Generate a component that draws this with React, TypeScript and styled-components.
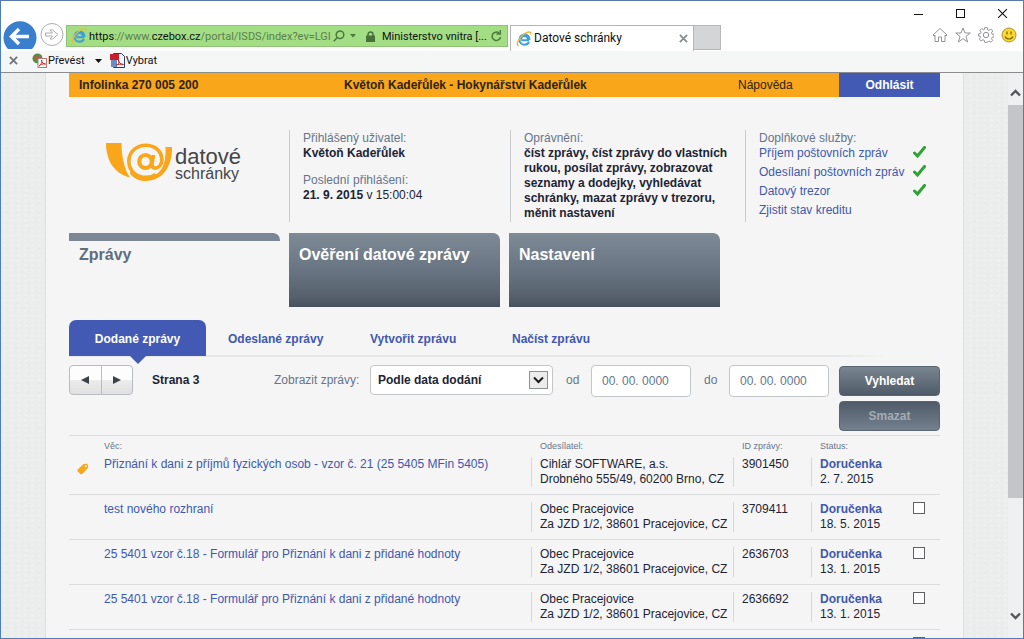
import React from "react";
import styled, { createGlobalStyle, css } from "styled-components";

const ui = `Roboto, "Open Sans", sans-serif`;
const body = `"Liberation Sans", Arial, sans-serif`;

const colors = {
  orange: "#f9a61b",
  blue: "#435ab5",
  link: "#3f58b0",
  page: "#f5f5f5",
  muted: "#66758c",
  text: "#1c2436",
  line: "#dadcde",
};

const GlobalStyle = createGlobalStyle`
  * { box-sizing: border-box; }
  body { margin: 0; background: #fff; font-family: ${body}; font-size: 12px; line-height: 15px; color: ${colors.text}; }
  button, input, select { font: inherit; color: inherit; margin: 0; }
  button { cursor: pointer; }
  a { color: ${colors.link}; text-decoration: none; }
  svg { display: block; flex: none; }
`;

const Window = styled.div`
  display: flex;
  flex-direction: column;
  height: 100vh;
  overflow: hidden;
  border: 1px solid #4a7ebf;
  border-top-color: #5a7ba5;
`;

/* Browser chrome */
const Chrome = styled.header`
  display: flex;
  align-items: flex-end;
  height: 50px;
  flex: none;
  padding-left: 2px;
  background: #fff;
  font-family: ${ui};
  font-size: 11px;
  color: #111;
`;

const IconButton = styled.button`
  display: block;
  padding: 0;
  border: 0;
  background: none;
`;

const NavButtons = styled.div`
  display: flex;
  align-items: center;
  gap: 3px;
  width: 63px;
  height: 32px;
  margin-bottom: 1px;
`;

const AddressBar = styled.div`
  display: flex;
  align-items: center;
  flex: 0 1 442px;
  height: 22px;
  margin-bottom: 4px;
  padding: 0 4px;
  background: #a3dd84;
  border: 1px solid #8fc276;
  white-space: nowrap;
`;

const Url = styled.div`
  width: 242px;
  margin-left: 2px;
  color: #5d7d4e;
  b { font-weight: 400; color: #111; }
`;

const AddressTools = styled.div`
  display: flex;
  align-items: center;
  gap: 5px;
  margin-left: 2px;
`;

const Certificate = styled.span`
  display: flex;
  align-items: center;
  gap: 7px;
  width: 121px;
  margin: 0 4px 0 10px;
`;

const BrowserTab = styled.div`
  display: flex;
  align-items: center;
  gap: 2px;
  width: 184px;
  height: 26px;
  margin-left: 2px;
  padding: 0 5px;
  border: 1px solid #b4b4b4;
  border-bottom: 0;
  background: #fff;
  font-size: 12px;
  span { flex: 1; }
`;

const NewTab = styled.button`
  width: 27px;
  height: 25px;
  margin-bottom: 1px;
  padding: 0;
  border: 1px solid #b8b8b8;
  border-left: 0;
  background: #d4d5d7;
`;

const WindowSide = styled.div`
  display: flex;
  flex-direction: column;
  align-items: flex-end;
  align-self: stretch;
  margin-left: auto;
  padding: 7px 6px 0 0;
  gap: 8px;
`;

const WindowButtons = styled.div`
  display: flex;
  gap: 31px;
  padding-right: 9px;
`;

const BrowserTools = styled.div`
  display: flex;
  gap: 7px;
`;

const Toolbar = styled.div`
  display: flex;
  align-items: center;
  flex: none;
  height: 22px;
  padding: 0 0 2px 8px;
  background: #f5f6f6;
  border-bottom: 1px solid #8a8c8f;
  font-family: ${ui};
  font-size: 11px;
  color: #111;
`;

const ToolItem = styled.button<{ $gap?: number }>`
  display: flex;
  align-items: center;
  gap: 1px;
  margin-left: ${(p) => p.$gap ?? 0}px;
  padding: 0;
  border: 0;
  background: none;
`;

/* Web page */
const Viewport = styled.div`
  display: flex;
  flex: 1;
  min-height: 0;
`;

const Backdrop = styled.main`
  flex: 1;
  min-width: 0;
  overflow: hidden;
  background-color: #ebeded;
  background-image: radial-gradient(#eeefef 1px, transparent 2px), radial-gradient(#e9ebeb 1px, transparent 2px);
  background-size: 7px 5px, 11px 9px;
`;

const Page = styled.div`
  max-width: 919px;
  margin: 0 auto;
  padding: 0 23px;
  background: ${colors.page};
  border: solid #dfe1e1;
  border-width: 0 1px;
`;

const TopBar = styled.div`
  display: grid;
  grid-template-columns: 275px 1fr 101px 101px;
  align-items: center;
  height: 24px;
  background: ${colors.orange};
  color: #2b2412;
  b { padding-left: 10px; }
  b + b { padding-left: 0; }
  > a { color: inherit; }
`;

const Logout = styled.button`
  height: 24px;
  border: 0;
  background: ${colors.blue};
  color: #fff;
  font-weight: 700;
`;

const Intro = styled.section`
  display: grid;
  grid-template-columns: 220px 221px 235px 1fr;
  margin-top: 33px;
  height: 92px;
`;

const InfoColumn = styled.div`
  padding: 1px 0 0 13px;
  border-left: 1px solid #c9cbcd;
`;

const Muted = styled.div`
  color: ${colors.muted};
`;

const InfoGroup = styled.div`
  margin-bottom: 12px;
`;

const Services = styled.ul`
  margin: 0;
  padding: 0;
  list-style: none;
  li { display: flex; justify-content: space-between; height: 19px; width: 167px; }
`;

const Logo = styled.a`
  display: flex;
  align-self: start;
  gap: 2px;
  margin: 12px 0 0 36px;
  color: #44464a;
`;

const LogoText = styled.div`
  font-size: 16px;
  line-height: 14px;
  padding-top: 5px;
  span { display: block; font-size: 22px; line-height: 20px; }
`;

const MainTabs = styled.nav`
  display: flex;
  gap: 9px;
  margin-top: 11px;
`;

const MainTab = styled.a<{ $active?: boolean }>`
  flex: 0 1 211px;
  height: 74px;
  padding: 14px 10px;
  border-radius: 0 7px 0 0;
  font-size: 16px;
  line-height: 16px;
  font-weight: 700;
  color: #fff;
  background: linear-gradient(#7f8a97, #66727f 55%, #56616d 85%, #47525e);
  ${(p) =>
    p.$active &&
    css`
      color: #5f6d80;
      background: linear-gradient(#7b8794, #7b8794) no-repeat 0 0 / 100% 8px;
    `}
`;

const SubTabs = styled.nav`
  display: flex;
  height: 37px;
  margin-top: 13px;
  background: linear-gradient(90deg, #e6e7e8 0 88%, transparent 94%) no-repeat 0 100% / 100% 2px;
  font-weight: 700;
`;

const SubTab = styled.a`
  width: 142px;
  padding: 12px 0 0 22px;
`;

const ActiveSubTab = styled.a`
  position: relative;
  width: 137px;
  height: 36px;
  padding-top: 12px;
  border-radius: 7px 7px 0 0;
  background: ${colors.blue};
  color: #fff;
  text-align: center;
  &::after {
    content: "";
    position: absolute;
    top: 100%;
    left: 50%;
    margin-left: -8px;
    border: solid transparent;
    border-top-color: ${colors.blue};
    border-width: 8px 8px 0;
  }
`;

const Filters = styled.form`
  display: flex;
  align-items: flex-start;
  margin-top: 8px;
  height: 70px;
  color: ${colors.muted};
  > * { flex: none; }
  b { width: 122px; margin-left: 19px; color: ${colors.text}; line-height: 30px; }
`;

const Pager = styled.div`
  display: flex;
  width: 64px;
  height: 30px;
  border: 1px solid #b9bcc0;
  border-radius: 4px;
  background: linear-gradient(#fdfdfd 50%, #ececec 50%, #e0e0e0);
`;

const PagerButton = styled.button`
  display: grid;
  place-items: center;
  flex: 1;
  padding: 0;
  border: 0;
  background: none;
  & + & { border-left: 1px solid #b9bcc0; }
`;

const FieldLabel = styled.label<{ $width: number }>`
  width: ${(p) => p.$width}px;
  line-height: 30px;
`;

const SelectBox = styled.div`
  position: relative;
  width: 183px;
  margin-right: 13px;
  svg { position: absolute; right: 5px; top: 6px; pointer-events: none; }
`;

const Select = styled.select`
  appearance: none;
  width: 100%;
  height: 30px;
  padding: 0 7px;
  border: 1px solid #c4c7ca;
  border-radius: 4px;
  background: #fff;
  color: ${colors.text};
  font-weight: 700;
`;

const DateInput = styled.input`
  width: 100px;
  height: 32px;
  padding: 0 10px;
  border: 1px solid #c4c7ca;
  border-radius: 4px;
  background: #fff;
  color: ${colors.muted};
  & + label { margin-left: 13px; }
`;

const Actions = styled.div`
  display: grid;
  gap: 5px;
  width: 101px;
  margin: 1px 0 0 auto;
`;

const ActionButton = styled.button`
  height: 30px;
  padding: 0;
  border: 1px solid #5a6572;
  border-radius: 4px;
  background: linear-gradient(#7a8592, #4f5b68);
  color: #fff;
  font-weight: 700;
  &:disabled { background: linear-gradient(#4f5b68, #74808e); color: #a3acb6; }
`;

const Messages = styled.table`
  width: 100%;
  table-layout: fixed;
  border-spacing: 0;
  th, td { padding: 0; text-align: left; vertical-align: top; }
  th {
    height: 21px;
    border-top: 1px solid ${colors.line};
    font-size: 9px;
    line-height: 20px;
    font-weight: 400;
    color: ${colors.muted};
  }
  th + th + th { padding-left: 9px; }
  td { height: 45px; padding: 7px 0; border-top: 1px solid ${colors.line}; }
  tbody tr:first-child td { height: 38px; padding-top: 1px; border-top: 0; }
`;

const Cell = styled.div`
  height: 30px;
  padding-left: 8px;
  border-left: 1px solid #d5d8db;
  white-space: nowrap;
`;

const Checkbox = styled.input`
  appearance: none;
  display: block;
  width: 12px;
  height: 12px;
  margin: 0 0 0 8px;
  border: 1px solid #5f6164;
  background: #fff;
`;

const TagCell = styled.div`
  padding: 6px 0 0 8px;
`;

const Scrollbar = styled.div`
  display: flex;
  flex-direction: column;
  align-items: center;
  width: 15px;
  padding: 16px 0 18px;
  background: #eff0f1;
`;

const ScrollThumb = styled.div`
  width: 100%;
  flex: 0 0 74%;
  margin: 8px 0 auto;
  background: #c3c5c8;
`;

const IeLogo = () => (
  <svg width="16" height="16" viewBox="0 0 16 16" fill="none">
    <path d="M13.2 9.3H5.2M5 8.2c.3-2 1.600-3.200 3.500-3.200s3.200 1.200 3.400 3.100M13 11c-.8 1.700-2.400 2.700-4.400 2.700C5.600 13.700 3.500 11.600 3.500 8.700s2.200-5.200 5.100-5.200c3 0 5 2.200 4.900 5.400" stroke="#3d9fe0" strokeWidth="2" />
    <path d="M2.500 14.800C-.5 14 3 7 7.500 3.500 11 .8 15.500-.5 14.800 3.500" stroke="#f0b92c" strokeWidth="1.400" />
  </svg>
);

const Check = () => (
  <svg width="13" height="13" viewBox="0 0 13 13">
    <path d="M1.500 7l3 3L11.500 1.500" fill="none" stroke="#2da336" strokeWidth="3" strokeLinecap="round" />
  </svg>
);

const Close = ({ size, color, weight = 1 }: { size: number; color: string; weight?: number }) => (
  <svg width={size} height={size} viewBox="0 0 10 10" stroke={color} strokeWidth={weight}>
    <path d="M1 1l8 8M9 1l-8 8" />
  </svg>
);

const Arrow = ({ left }: { left?: boolean }) => (
  <svg width="8" height="8" viewBox="0 0 8 8" fill="#3c4048">
    <path d={left ? "M8 0v8L0 4z" : "M0 0v8l8-4z"} />
  </svg>
);

const ScrollArrow = ({ down }: { down?: boolean }) => (
  <svg width="11" height="8" viewBox="0 0 11 8" fill="none" stroke="#54575b" strokeWidth="2.400">
    <path d={down ? "M1 1.500l4.500 4.500L10 1.500" : "M1 6.500L5.500 2 10 6.500"} />
  </svg>
);

const PdfIcon = ({ globe }: { globe?: boolean }) => (
  <svg width="15" height="15" viewBox="0 0 15 15">
    {globe ? (
      <>
        <circle cx="5.500" cy="5.500" r="5" fill="#3b9e45" />
        <path d="M2 2.500l4-1 2 2-3 2-3 3zM8 1l2 2-1 3z" fill="#9a6a45" />
        <rect x="6" y="5.500" width="8.500" height="9" fill="#fff" stroke="#b77" />
        <path d="M7 13c3-2 3-5 2.500-6 0 3 2 4 4 4-3-.5-5 .5-6.500 2z" fill="none" stroke="#d22" />
      </>
    ) : (
      <>
        <path d="M3.500.5h8l3 3v11h-11z" fill="#f4f6fa" stroke="#223f7d" />
        <rect x="0" y="1" width="9" height="6" fill="#c8202f" />
        <rect x="1" y="7" width="6" height="7" fill="#6c8ac4" />
        <path d="M6 12.500c4-2 3-4.500 2.500-5.500 0 3 2 4 5 4.500-3-.5-6-.5-7.500 1z" fill="none" stroke="#c22" />
      </>
    )}
  </svg>
);

const HornLogo = () => (
  <svg width="68" height="41" viewBox="0 0 68 41" fill="none">
    <path d="M1 1h15.500c0 14 3 26 8.500 34.500C10 32 1 19 1 1z" fill={colors.orange} />
    <path d="M60.500 5h6.500c.5 19-9 34-26.500 34-6.500 0-12-2.500-16-8l3-3c8 8 20 8.500 27 1.500 4.500-5 6.500-12 6-24.500z" fill={colors.orange} />
    <path d="M51 32.500C46 36 36 37 29.500 31.500c-7.500-6.500-7.500-17.500-.5-24 7-6 18-5.500 24 .5 4.500 4.700 5 11.500 2 15.500-3 3.800-8.500 3.500-8-1.500l1.500-9" stroke={colors.orange} strokeWidth="3.600" />
    <ellipse cx="40.500" cy="19.500" rx="6.300" ry="6.500" stroke={colors.orange} strokeWidth="4" />
  </svg>
);

interface Message {
  subject: string;
  sender: string;
  address: string;
  id: string;
  date: string;
  tagged?: boolean;
}

const form = "25 5401 vzor č.18 - Formulář pro Přiznání k dani z přidané hodnoty";
const obec = { sender: "Obec Pracejovice", address: "Za JZD 1/2, 38601 Pracejovice, CZ" };

const messages: Message[] = [
  { subject: "Přiznání k dani z příjmů fyzických osob - vzor č. 21 (25 5405 MFin 5405)", sender: "Cihlář SOFTWARE, a.s.", address: "Drobného 555/49, 60200 Brno, CZ", id: "3901450", date: "2. 7. 2015", tagged: true },
  { subject: "test nového rozhraní", ...obec, id: "3709411", date: "18. 5. 2015" },
  { subject: form, ...obec, id: "2636703", date: "13. 1. 2015" },
  { subject: form, ...obec, id: "2636692", date: "13. 1. 2015" },
];

const services = ["Příjem poštovních zpráv", "Odesílaní poštovních zpráv", "Datový trezor"];

const BrowserChrome = () => (
  <>
    <Chrome>
      <NavButtons>
        <IconButton aria-label="Zpět">
          <svg width="34" height="32" viewBox="0 0 34 32">
            <path d="M5 31A16.500 16.500 0 1 1 29 31z" fill="#3a7fce" />
            <path d="M26 18.500H9.500M16 11l-7.500 7.500L16 26" fill="none" stroke="#fff" strokeWidth="3.400" />
          </svg>
        </IconButton>
        <IconButton aria-label="Vpřed">
          <svg width="24" height="24" viewBox="0 0 24 24" fill="#fff" stroke="#aaacae">
            <circle cx="12" cy="12.500" r="11" />
            <path d="M5.500 11h7l-2.500-3h2.500l5.500 4.500-5.500 4.500H10l2.500-3h-7z" />
          </svg>
        </IconButton>
      </NavButtons>
      <AddressBar>
        <IeLogo />
        <Url role="textbox" aria-label="Adresa">
          <b>https</b>://www.<b>czebox.cz</b>/portal/ISDS/index?ev=LGI
        </Url>
        <AddressTools>
          <IconButton aria-label="Hledat">
            <svg width="12" height="12" viewBox="0 0 12 12" fill="none" stroke="#4b7a3c" strokeWidth="1.500">
              <circle cx="7" cy="4.800" r="3.800" />
              <path d="M4.300 7.500L.8 11.200" />
            </svg>
          </IconButton>
          <svg width="6" height="4" viewBox="0 0 6 4" fill="#4b7a3c"><path d="M0 0h6L3 3.500z" /></svg>
        </AddressTools>
        <Certificate>
          <svg width="9" height="11" viewBox="0 0 9 11">
            <path d="M2 5V3.500a2.500 2.500 0 0 1 5 0V5" fill="none" stroke="#47733a" strokeWidth="1.500" />
            <rect y="4.500" width="9" height="6.500" fill="#47733a" />
          </svg>
          Ministerstvo vnitra [...
        </Certificate>
        <IconButton aria-label="Aktualizovat">
          <svg width="11" height="12" viewBox="0 0 11 12" fill="none" stroke="#4b7a3c" strokeWidth="1.500">
            <path d="M9.500 7A4.200 4.200 0 1 1 8 3M9.300 0v4H5.500" />
          </svg>
        </IconButton>
      </AddressBar>
      <BrowserTab>
        <IeLogo />
        <span>Datové schránky</span>
        <IconButton aria-label="Zavřít kartu"><Close size={9} color="#8a8c8f" weight={2} /></IconButton>
      </BrowserTab>
      <NewTab aria-label="Nová karta" />
      <WindowSide>
        <WindowButtons>
          <IconButton aria-label="Minimalizovat">
            <svg width="11" height="11" viewBox="0 0 11 11" stroke="#111"><path d="M1 6.500h9" /></svg>
          </IconButton>
          <IconButton aria-label="Maximalizovat">
            <svg width="11" height="11" viewBox="0 0 11 11" fill="none" stroke="#111"><rect x="1.500" y="1.500" width="8" height="8" /></svg>
          </IconButton>
          <IconButton aria-label="Zavřít"><Close size={11} color="#111" /></IconButton>
        </WindowButtons>
        <BrowserTools>
          <IconButton aria-label="Domů">
            <svg width="16" height="16" viewBox="0 0 16 16" fill="#fff" stroke="#909397">
              <path d="M1 8l7-6.500L15 8l-1 1-1-.8v6.300H9.500V10h-3v4.500H3V8.200L2 9z" />
            </svg>
          </IconButton>
          <IconButton aria-label="Oblíbené">
            <svg width="16" height="16" viewBox="0 0 16 16" fill="#fff" stroke="#909397">
              <path d="M8 1l2 5h5.300l-4.300 3.400L12.600 15 8 11.600 3.400 15 5 9.400.7 6H6z" />
            </svg>
          </IconButton>
          <IconButton aria-label="Nástroje">
            <svg width="16" height="16" viewBox="0 0 24 24" fill="#fff" stroke="#909397" strokeWidth="1.500">
              <path d="M10 1h4l.6 3.200 2 .9 2.800-1.900 2.700 2.700-1.800 2.800.8 2 3.100.6v3.500l-3.100.7-.8 2 1.800 2.700-2.700 2.700-2.800-1.800-2 .9L14 23h-4l-.6-3-2-.9-2.800 1.800-2.700-2.700 1.800-2.700-.8-2L.8 13.800v-3.500l3.100-.6.800-2L2.900 5l2.700-2.700 2.800 1.900 1-.4z" />
              <circle cx="12" cy="12" r="4" />
            </svg>
          </IconButton>
          <IconButton aria-label="Zpětná vazba">
            <svg width="16" height="16" viewBox="0 0 16 16">
              <circle cx="8" cy="8" r="7" fill="#fbd92c" stroke="#a9973a" />
              <path d="M4 9.500c1.500 3.300 6.500 3.300 8 0M6 4.500v3M10 4.500v3" fill="none" stroke="#7a5e14" strokeWidth="1.200" />
            </svg>
          </IconButton>
        </BrowserTools>
      </WindowSide>
    </Chrome>
    <Toolbar>
      <ToolItem aria-label="Zavřít panel"><Close size={9} color="#70757c" weight={2} /></ToolItem>
      <ToolItem $gap={14}><PdfIcon globe />Převést</ToolItem>
      <ToolItem $gap={10} aria-label="Další možnosti">
        <svg width="7" height="4" viewBox="0 0 7 4"><path d="M0 0h7L3.500 4z" fill="#111" /></svg>
      </ToolItem>
      <ToolItem $gap={8}><PdfIcon />Vybrat</ToolItem>
    </Toolbar>
  </>
);

const IntroSection = () => (
  <Intro>
    <Logo href="#" aria-label="Datové schránky">
      <HornLogo />
      <LogoText><span>datové</span>schránky</LogoText>
    </Logo>
    <InfoColumn>
      <InfoGroup>
        <Muted>Přihlášený uživatel:</Muted>
        <b>Květoň Kadeřůlek</b>
      </InfoGroup>
      <Muted>Poslední přihlášení:</Muted>
      <b>21. 9. 2015</b> v 15:00:04
    </InfoColumn>
    <InfoColumn>
      <Muted>Oprávnění:</Muted>
      <b>
        číst zprávy, číst zprávy do vlastních<br />rukou, posílat zprávy, zobrazovat<br />seznamy a dodejky, vyhledávat<br />schránky, mazat zprávy v trezoru,<br />měnit nastavení
      </b>
    </InfoColumn>
    <InfoColumn>
      <Muted>Doplňkové služby:</Muted>
      <Services>
        {services.map((name) => (
          <li key={name}><a href="#">{name}</a><Check /></li>
        ))}
        <li><a href="#">Zjistit stav kreditu</a></li>
      </Services>
    </InfoColumn>
  </Intro>
);

const FilterBar = () => (
  <Filters onSubmit={(e) => e.preventDefault()}>
    <Pager>
      <PagerButton type="button" aria-label="Předchozí strana"><Arrow left /></PagerButton>
      <PagerButton type="button" aria-label="Další strana"><Arrow /></PagerButton>
    </Pager>
    <b>Strana 3</b>
    <FieldLabel $width={96} htmlFor="sort">Zobrazit zprávy:</FieldLabel>
    <SelectBox>
      <Select id="sort"><option>Podle data dodání</option></Select>
      <svg width="19" height="18" viewBox="0 0 19 18">
        <rect x=".5" y=".5" width="18" height="17" fill="#ececec" stroke="#8e9196" />
        <path d="M5 6.500l4.500 4.500L14 6.500" fill="none" stroke="#1b1b1b" strokeWidth="2" />
      </svg>
    </SelectBox>
    <FieldLabel $width={25} htmlFor="from">od</FieldLabel>
    <DateInput id="from" defaultValue="00. 00. 0000" />
    <FieldLabel $width={25} htmlFor="to">do</FieldLabel>
    <DateInput id="to" defaultValue="00. 00. 0000" />
    <Actions>
      <ActionButton>Vyhledat</ActionButton>
      <ActionButton type="button" disabled>Smazat</ActionButton>
    </Actions>
  </Filters>
);

const MessageTable = () => (
  <Messages>
    <colgroup>
      <col style={{ width: 35 }} />
      <col />
      <col style={{ width: 202 }} />
      <col style={{ width: 78 }} />
      <col style={{ width: 94 }} />
      <col style={{ width: 35 }} />
    </colgroup>
    <thead>
      <tr>
        <th />
        <th>Věc:</th>
        <th>Odesílatel:</th>
        <th>ID zprávy:</th>
        <th>Status:</th>
        <th />
      </tr>
    </thead>
    <tbody>
      {messages.map((m) => (
        <tr key={m.id}>
          <td>
            {m.tagged && (
              <TagCell>
                <svg width="12" height="12" viewBox="0 0 12 12">
                  <path d="M.7 6.500L6.500 1l4-.3L11.300 4.500 5.500 10.800Q4 11.800 3 10.800L.8 8.500Q0 7.500.7 6.500z" fill={colors.orange} />
                  <circle cx="8.800" cy="3.200" r="1" fill="#f5f5f5" />
                </svg>
              </TagCell>
            )}
          </td>
          <td><a href="#">{m.subject}</a></td>
          <td><Cell>{m.sender}<br />{m.address}</Cell></td>
          <td><Cell>{m.id}</Cell></td>
          <td><Cell><a href="#"><b>Doručenka</b></a><br />{m.date}</Cell></td>
          <td>{!m.tagged && <Checkbox type="checkbox" aria-label={`Vybrat zprávu ${m.id}`} />}</td>
        </tr>
      ))}
      <tr>
        <td /><td /><td /><td /><td />
        <td><Checkbox type="checkbox" aria-label="Vybrat zprávu" /></td>
      </tr>
    </tbody>
  </Messages>
);

export default function App() {
  return (
    <Window>
      <GlobalStyle />
      <BrowserChrome />
      <Viewport>
        <Backdrop>
          <Page>
            <TopBar>
              <b>Infolinka 270 005 200</b>
              <b>Květoň Kadeřůlek - Hokynářství Kadeřůlek</b>
              <a href="#">Nápověda</a>
              <Logout>Odhlásit</Logout>
            </TopBar>
            <IntroSection />
            <MainTabs>
              <MainTab href="#" $active>Zprávy</MainTab>
              <MainTab href="#">Ověření datové zprávy</MainTab>
              <MainTab href="#">Nastavení</MainTab>
            </MainTabs>
            <SubTabs>
              <ActiveSubTab href="#">Dodané zprávy</ActiveSubTab>
              <SubTab href="#">Odeslané zprávy</SubTab>
              <SubTab href="#">Vytvořit zprávu</SubTab>
              <SubTab href="#">Načíst zprávu</SubTab>
            </SubTabs>
            <FilterBar />
            <MessageTable />
          </Page>
        </Backdrop>
        <Scrollbar>
          <ScrollArrow />
          <ScrollThumb />
          <ScrollArrow down />
        </Scrollbar>
      </Viewport>
    </Window>
  );
}
